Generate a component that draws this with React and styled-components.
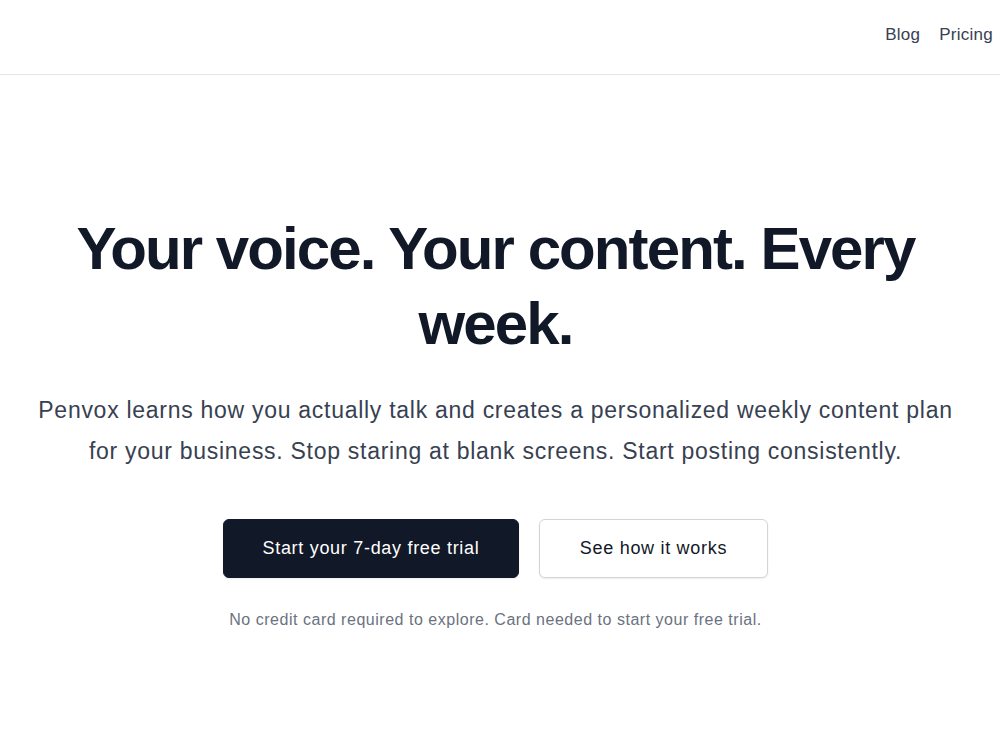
import React from "react";
import styled, { createGlobalStyle } from "styled-components";

const Global = createGlobalStyle`
  html, body { margin: 0; padding: 0; background: #fff; }
  body { font-family: "Liberation Sans", Arial, sans-serif; -webkit-font-smoothing: antialiased; }
  * { box-sizing: border-box; }
`;

const Header = styled.header`
  height: 75px;
  border-bottom: 1px solid #e5e7eb;
  display: flex;
  align-items: center;
  justify-content: flex-end;
  padding: 0 7px 4px 0;
`;

const Nav = styled.nav`
  display: flex;
  gap: 19px;
`;

const NavLink = styled.a`
  font-size: 17px;
  letter-spacing: 0.25px;
  color: #374151;
  text-decoration: none;
`;

const Hero = styled.main`
  display: flex;
  flex-direction: column;
  align-items: center;
  text-align: center;
  padding: 136px 9px 0 0;
`;

const Title = styled.h1`
  margin: 0;
  max-width: 880px;
  font-size: 60px;
  line-height: 75px;
  font-weight: 700;
  color: #111827;
  letter-spacing: -1.9px;
`;

const Lead = styled.p`
  margin: 29px 0 0;
  max-width: 935px;
  font-size: 23px;
  line-height: 41px;
  letter-spacing: 0.72px;
  color: #374151;
`;

const Actions = styled.div`
  display: flex;
  gap: 20px;
  margin-top: 47px;
`;

const Button = styled.a`
  display: inline-flex;
  align-items: center;
  justify-content: center;
  height: 59px;
  width: ${(p) => p.$w}px;
  border-radius: 6px;
  font-size: 18px;
  letter-spacing: 0.7px;
  text-decoration: none;
  background: ${(p) => (p.$primary ? "#111827" : "#fff")};
  color: ${(p) => (p.$primary ? "#fff" : "#111827")};
  border: 1px solid ${(p) => (p.$primary ? "#111827" : "#d1d5db")};
  box-shadow: 0 1px 2px rgba(0, 0, 0, 0.08);
`;

const Note = styled.p`
  margin: 33px 0 0;
  font-size: 16px;
  letter-spacing: 0.52px;
  color: #6b7280;
`;

export default function App() {
  return (
    <>
      <Global />
      <Header>
        <Nav>
          <NavLink href="#">Blog</NavLink>
          <NavLink href="#">Pricing</NavLink>
        </Nav>
      </Header>
      <Hero>
        <Title>Your voice. Your content. Every week.</Title>
        <Lead>
          Penvox learns how you actually talk and creates a personalized weekly content plan for your
          business. Stop staring at blank screens. Start posting consistently.
        </Lead>
        <Actions>
          <Button $primary $w={296} href="#">Start your 7-day free trial</Button>
          <Button $w={229} href="#">See how it works</Button>
        </Actions>
        <Note>No credit card required to explore. Card needed to start your free trial.</Note>
      </Hero>
    </>
  );
}
